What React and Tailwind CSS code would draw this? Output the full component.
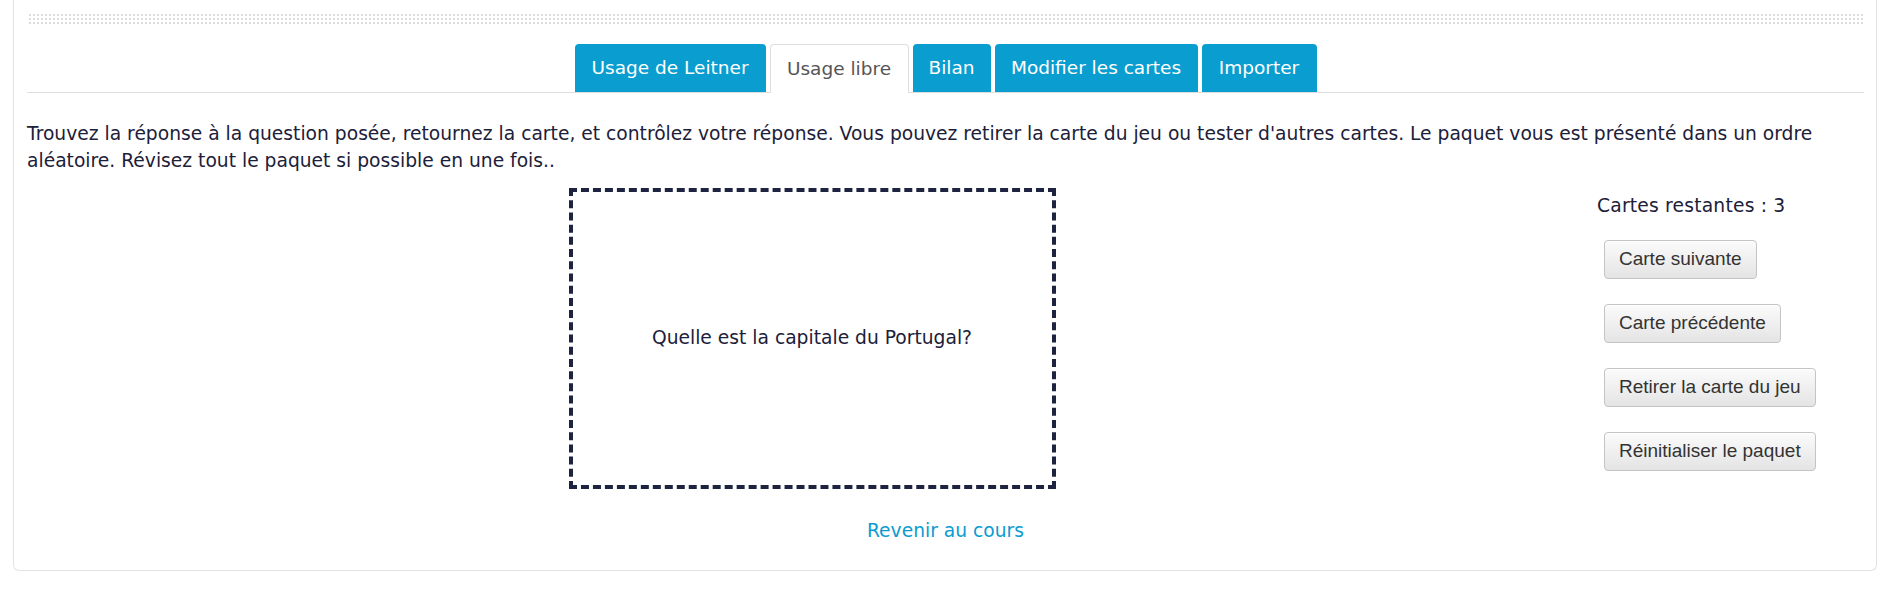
const TABS = [
  { label: 'Usage de Leitner', w: 'w-[191px]' },
  { label: 'Usage libre', w: 'w-[139px]', active: true },
  { label: 'Bilan', w: 'w-[78px]' },
  { label: 'Modifier les cartes', w: 'w-[203px]' },
  { label: 'Importer', w: 'w-[115px]' },
]

const ACTIONS = ['Carte suivante', 'Carte précédente', 'Retirer la carte du jeu', 'Réinitialiser le paquet']

function Tabs() {
  return (
    <div className="flex items-end justify-center gap-[4px] border-b border-[#dedede]">
      {TABS.map((t) =>
        t.active ? (
          <div
            key={t.label}
            className={`${t.w} -mb-px flex h-[49px] items-center justify-center rounded-t-[4px] border border-b-0 border-[#dedede] bg-white text-[18.5px] text-[#555]`}
          >
            {t.label}
          </div>
        ) : (
          <div
            key={t.label}
            className={`${t.w} flex h-[48px] items-center justify-center rounded-t-[4px] bg-[#0a9dd0] text-[18.5px] text-white`}
          >
            {t.label}
          </div>
        )
      )}
    </div>
  )
}

export default function App() {
  return (
    <div className="min-h-[592px] bg-white font-['DejaVu_Sans',Verdana,sans-serif] text-[#1c2039]">
      <div className="ml-[13px] w-[1864px] rounded-b-[6px] border border-t-0 border-[#e2e2e2] pl-[13px] pr-[12px] pb-[27px]">
        <div className="h-[12px] translate-y-[12px] bg-[#dcdcdc] bg-[linear-gradient(90deg,#fff_2px,transparent_2px),linear-gradient(#fff_2px,transparent_2px)] bg-[size:4px_4px]" />
        <div className="mt-[32px]">
          <Tabs />
        </div>

        <p className="mt-[27px] text-[18.7px] leading-[27px]">
          Trouvez la réponse à la question posée, retournez la carte, et contrôlez votre réponse. Vous pouvez retirer la carte du jeu ou tester d'autres cartes. Le paquet vous est présenté dans un ordre aléatoire. Révisez tout le paquet si possible en une fois..
        </p>

        <div className="mt-[14px] flex">
          <div className="flex flex-1 justify-center">
            <div className="flex h-[301px] w-[487px] items-center justify-center border-4 border-dashed border-[#1e2440] text-[18.7px]">
              Quelle est la capitale du Portugal?
            </div>
          </div>
          <div className="w-[267px] pt-[6px]">
            <div className="text-[18.7px] leading-[24px] tracking-[0.2px]">Cartes restantes : 3</div>
            <div className="mt-[22px] flex flex-col items-start gap-[25px] pl-[7px]">
              {ACTIONS.map((a) => (
                <button
                  key={a}
                  type="button"
                  className="h-[39px] rounded-[4px] border border-[#c4c4c4] bg-[linear-gradient(#fbfbfb,#e4e4e4)] px-[14px] font-['Liberation_Sans',Arial,sans-serif] text-[19px] text-[#333] shadow-[inset_0_1px_0_#fff]"
                >
                  {a}
                </button>
              ))}
            </div>
          </div>
        </div>

        <div className="mt-[30px] text-center text-[18.7px] leading-[24px]">
          <a href="#" className="text-[#0c9bd1]">
            Revenir au cours
          </a>
        </div>
      </div>
    </div>
  )
}
